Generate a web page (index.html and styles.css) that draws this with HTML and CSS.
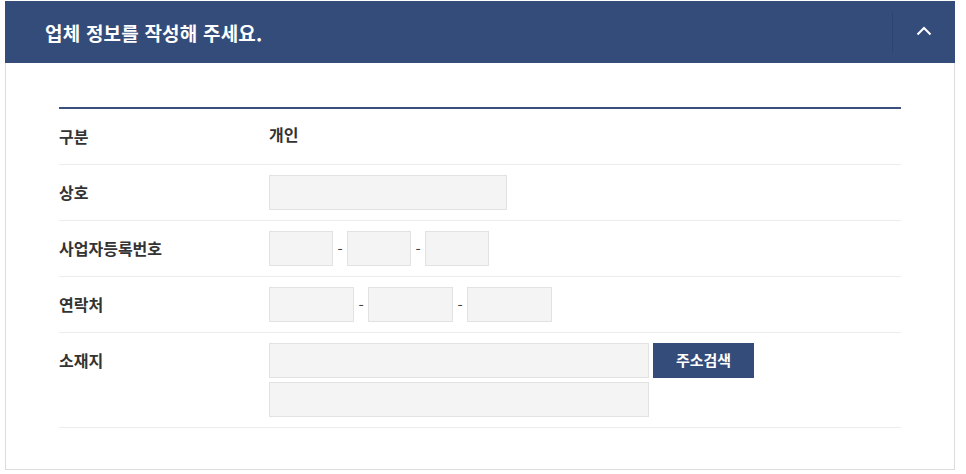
FILE: index.html
```html
<!DOCTYPE html>
<html lang="ko">
<head>
<meta charset="utf-8">
<link rel="stylesheet" href="styles.css">
</head>
<body>
<section class="panel">
  <header class="panel-head">
    <h2 class="panel-title">업체 정보를 작성해 주세요.</h2>
    <button class="toggle" type="button" aria-label="접기">
      <svg width="16" height="10" viewBox="0 0 16 10"><path d="M1.5 8.5 L8 2 L14.5 8.5" fill="none" stroke="#fff" stroke-width="2"/></svg>
    </button>
  </header>
  <div class="panel-body">
    <div class="form">
      <div class="row">
        <div class="label">구분</div>
        <div class="value text">개인</div>
      </div>
      <div class="row">
        <div class="label">상호</div>
        <div class="value"><input class="field w-name" type="text"></div>
      </div>
      <div class="row">
        <div class="label">사업자등록번호</div>
        <div class="value">
          <input class="field w-biz" type="text"><span class="dash">-</span><input class="field w-biz" type="text"><span class="dash">-</span><input class="field w-biz" type="text">
        </div>
      </div>
      <div class="row">
        <div class="label">연락처</div>
        <div class="value">
          <input class="field w-tel" type="text"><span class="dash">-</span><input class="field w-tel" type="text"><span class="dash">-</span><input class="field w-tel" type="text">
        </div>
      </div>
      <div class="row">
        <div class="label">소재지</div>
        <div class="value stack">
          <div class="line">
            <input class="field w-addr" type="text"><button class="btn" type="button">주소검색</button>
          </div>
          <div class="line">
            <input class="field w-addr" type="text">
          </div>
        </div>
      </div>
    </div>
  </div>
</section>
</body>
</html>
```

FILE: styles.css
```css
* { box-sizing: border-box; }
html, body { margin: 0; padding: 0; background: #fff; }
body {
  font-family: "Noto Sans CJK KR", "Noto Sans", sans-serif;
  color: #333;
  padding: 1px 0 0 5px;
}
.panel { width: 950px; }
.panel-head {
  height: 62px;
  background: #344c7a;
  display: flex;
  align-items: center;
  padding-left: 40px;
}
.panel-title {
  margin: 0;
  flex: 1;
  color: #fff;
  font-size: 19px;
  font-weight: 700;
  letter-spacing: 0.2px;
}
.toggle {
  width: 63px;
  height: 41px;
  border: 0;
  border-left: 1px solid #2d4470;
  background: transparent;
  padding: 0;
  display: flex;
  align-items: center;
  justify-content: center;
  cursor: pointer;
}
.toggle svg { display: block; margin-top: -3px; }
.panel-body {
  border: 1px solid #dcdcdc;
  border-top: 0;
  padding: 44px 53px 41px;
}
.form { border-top: 2px solid #3a4f7b; }
.row {
  display: flex;
  align-items: flex-start;
  padding: 10px 0;
  border-bottom: 1px solid #ececec;
}
.label {
  width: 210px;
  line-height: 35px;
  font-size: 16px;
  font-weight: 700;
  color: #333;
}
.value {
  display: flex;
  align-items: center;
}
.value.text {
  line-height: 31px;
  height: 35px;
  font-size: 16px;
  font-weight: 700;
  align-items: flex-start;
}
.stack { flex-direction: column; align-items: flex-start; gap: 4px; }
.line { display: flex; align-items: center; gap: 4px; }
.field {
  height: 35px;
  margin: 0;
  padding: 0 8px;
  background: #f4f4f4;
  border: 1px solid #e2e2e2;
  border-radius: 0;
  font: inherit;
  outline: none;
}
.w-name { width: 238px; }
.w-biz { width: 64px; }
.w-tel { width: 85px; }
.w-addr { width: 380px; }
.dash {
  width: 14px;
  text-align: center;
  font-size: 15px;
  color: #444;
}
.btn {
  width: 101px;
  height: 35px;
  border: 0;
  margin: 0;
  background: #344c7a;
  color: #fff;
  font-family: inherit;
  font-size: 15px;
  font-weight: 700;
  padding: 0 0 3px;
  cursor: pointer;
}
```
